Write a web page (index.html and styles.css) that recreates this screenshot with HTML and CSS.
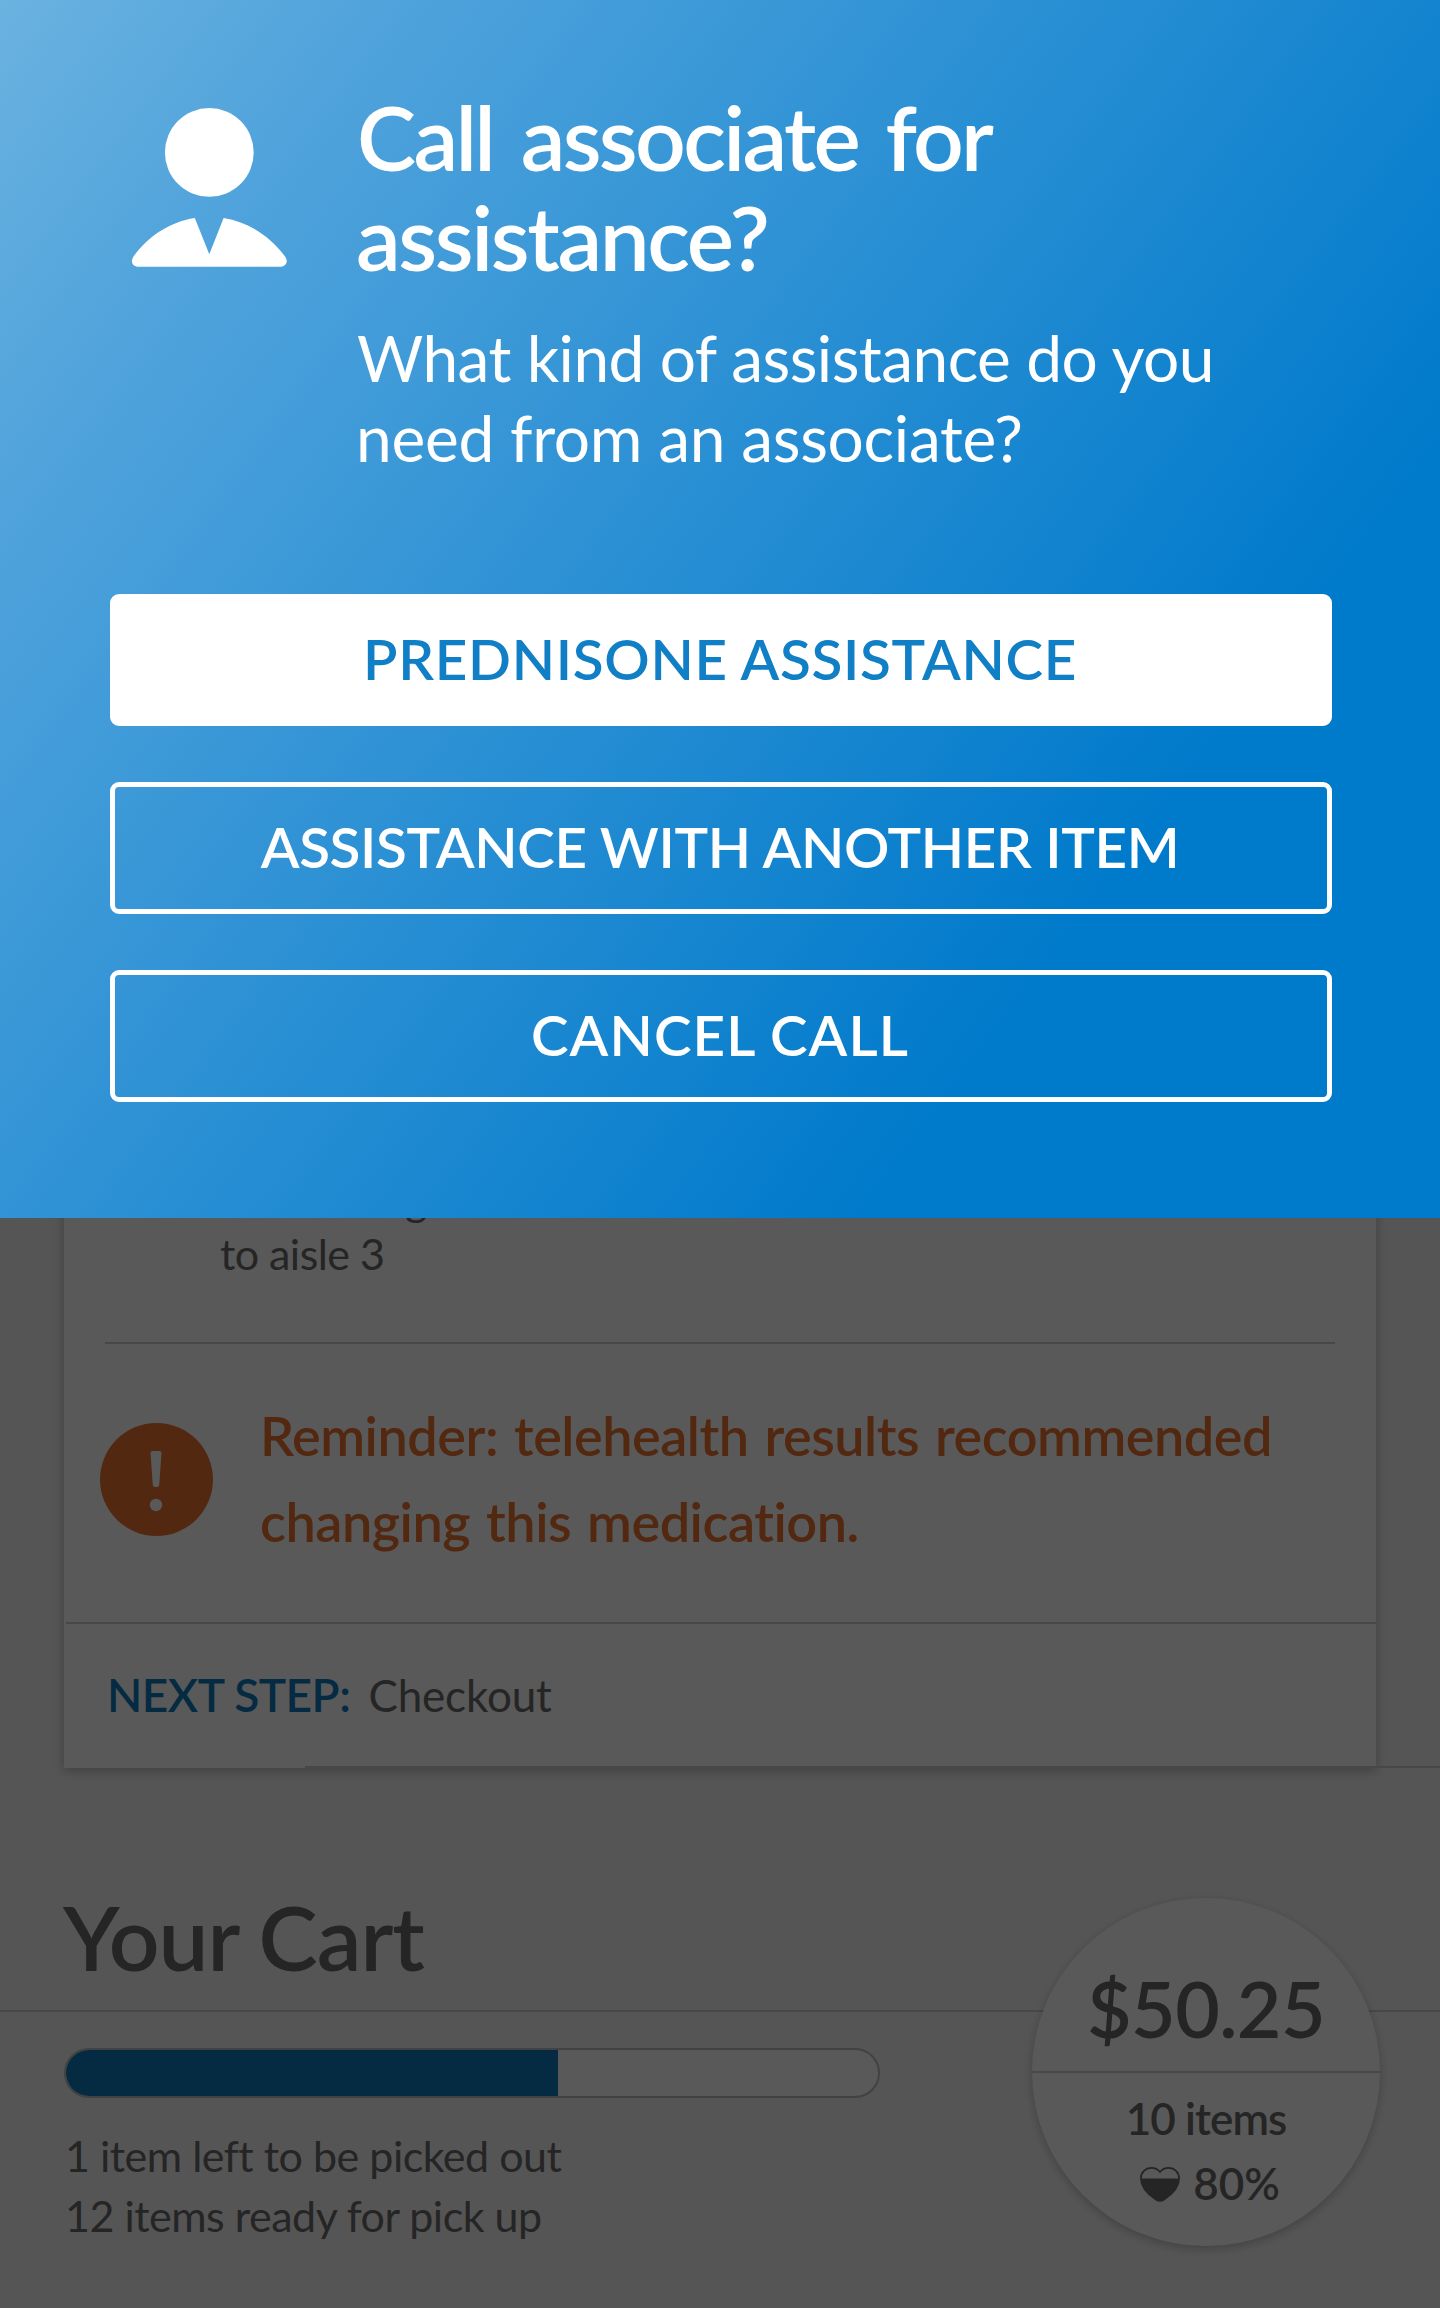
FILE: index.html
```html
<!DOCTYPE html>
<html lang="en">
<head>
<meta charset="utf-8">
<title>Call associate</title>
<link rel="stylesheet" href="styles.css">
</head>
<body>
<div class="screen">
  <main class="page">
    <section class="card">
      <p class="direction"><span class="direction-end">g</span><span>to aisle 3</span></p>
      <div class="divider"></div>
      <div class="reminder">
        <svg class="alert-icon" viewBox="0 0 113 113" aria-hidden="true">
          <circle class="alert-disc" cx="56.5" cy="56.5" r="56.5"/>
          <path class="alert-mark" d="M52.500 28h7a2 2 0 0 1 2 2l-2.300 32a2 2 0 0 1-2 2h-2.400a2 2 0 0 1-2-2l-2.300-32a2 2 0 0 1 2-2z"/>
          <circle class="alert-mark" cx="56" cy="82" r="6.200"/>
        </svg>
        <p class="reminder-text"><span>Reminder: telehealth results recommended</span><span>changing this medication.</span></p>
      </div>
      <div class="next">
        <span class="next-label">NEXT STEP:</span>
        <span class="next-value">Checkout</span>
      </div>
    </section>

    <section class="cart">
      <h2 class="cart-title">Your Cart</h2>
      <div class="cart-detail">
        <div class="progress"><div class="progress-fill" style="width: 492px"></div></div>
        <p class="cart-status"><span>1 item left to be picked out</span><span class="ready">12 items ready for pick up</span></p>
      </div>
      <div class="total">
        <div class="price">$50.25</div>
        <div class="total-info">
          <div class="count">10 items</div>
          <div class="health">
            <svg class="heart" viewBox="0 0 40 35" aria-hidden="true">
              <path class="heart-line" d="M20 5C17.500 2 14.500 .9 11.500 .9C5.500 .9 .9 5.600 .9 11.500C.9 20 8.500 27.500 15.500 32.300C18.500 34.500 21.500 34.500 24.500 32.300C31.500 27.500 39.100 20 39.100 11.500C39.100 5.600 34.500 .9 28.500 .9C25.500 .9 22.500 2 20 5z"/>
              <path class="heart-fill" d="M.9 11.500H39.100C39.100 20 31.500 27.500 24.500 32.300C21.500 34.500 18.500 34.500 15.500 32.300C8.500 27.500 .9 20 .9 11.500z"/>
            </svg>
            <span>80%</span>
          </div>
        </div>
      </div>
    </section>
  </main>

  <div class="scrim"></div>

  <section class="modal">
    <header class="modal-head">
      <svg class="person" viewBox="0 0 155 159" aria-hidden="true">
        <circle cx="77.300" cy="44.400" r="44.400"/>
        <path d="M62.800 110L77.300 146.200L91.600 110C117 114 139 129 153 148.500C157.500 155 152.500 158.800 148 158.800H7C2 158.800 -2.500 155 1.500 148.500C15.500 129 37 114 62.800 110z"/>
      </svg>
      <div class="modal-copy">
        <h1 class="modal-title"><span class="title-a">Call associate for</span><span class="title-b">assistance?</span></h1>
        <p class="modal-text"><span class="text-a">What kind of assistance do you</span><span class="text-b">need from an associate?</span></p>
      </div>
    </header>
    <div class="actions">
      <button class="btn btn-primary">PREDNISONE ASSISTANCE</button>
      <button class="btn btn-other">ASSISTANCE WITH ANOTHER ITEM</button>
      <button class="btn btn-cancel">CANCEL CALL</button>
    </div>
  </section>
</div>
</body>
</html>
```
FILE: styles.css
```css
* { box-sizing: border-box; margin: 0; padding: 0; }

body { font-family: Lato, "Open Sans", sans-serif; color: #6b6b6b; }
p span, h1 span { display: block; white-space: nowrap; }
svg { display: block; flex: none; }

.screen { position: relative; width: 1440px; height: 2308px; overflow: hidden; background: #f3f3f3; }

/* Page beneath the modal */
.card {
  width: 1312px; height: 1768px; margin-left: 64px; padding-top: 1164px;
  background: #fff; box-shadow: 0 3px 10px rgba(0, 0, 0, .26);
}
.direction { padding-left: 156px; font-size: 43px; line-height: 60px; letter-spacing: -.55px; }
.direction .direction-end { height: 60px; padding: 6px 0 0 185px; }
.divider { height: 2px; margin: 58px 41px 0 41px; background: #cecece; }
.reminder { display: flex; gap: 47px; height: 278px; padding: 49px 0 0 36px; color: #ea7231; }
.alert-icon { width: 113px; height: 113px; margin-top: 30px; }
.alert-disc { fill: #ea7231; }
.alert-mark { fill: #fff; }
.reminder-text { font-size: 54px; font-weight: 600; line-height: 86px; letter-spacing: -.48px; word-spacing: 3px; }
.next {
  display: flex; align-items: baseline; gap: 18px; margin-left: 2px; padding: 43px 0 0 41px;
  border-top: 2px solid #cecece; line-height: 56px;
}
.next-label { font-size: 46px; font-weight: 600; letter-spacing: -.5px; color: #117bbd; }
.next-value { font-size: 44px; letter-spacing: -.15px; }

.cart { position: relative; padding-top: 119px; }
.cart::before { content: ""; position: absolute; top: -2px; left: 305px; right: 0; height: 2px; background: #cecece; }
.cart-title {
  height: 125px; padding-left: 63px; border-bottom: 2px solid #cecece;
  font-size: 89px; font-weight: 600; line-height: 100px; letter-spacing: -1px;
}
.cart-detail { padding: 36px 0 0 64px; }
.progress { width: 816px; height: 50px; overflow: hidden; border: 2px solid #bcbcbc; border-radius: 25px; background: #fff; }
.progress-fill { height: 100%; background: #117bbd; }
.cart-status { margin-top: 28px; padding-left: 1px; font-size: 43px; line-height: 60px; letter-spacing: -.5px; }

.total {
  position: absolute; top: 130px; left: 1032px; width: 348px; height: 348px; overflow: visible;
  border-radius: 50%; background: #fff; box-shadow: 0 3px 10px rgba(0, 0, 0, .22);
  font-weight: 600; text-align: center;
}
.price { height: 175px; padding-top: 70px; border-bottom: 2px solid #cecece; font-size: 77px; line-height: 80px; letter-spacing: -.6px; }
.total-info { padding-top: 13px; font-size: 44px; line-height: 65px; }
.count { letter-spacing: -.9px; }
.health { display: flex; justify-content: center; gap: 13px; padding-left: 8px; }
.heart { width: 40px; height: 35px; margin-top: 16px; }
.heart-line { fill: none; stroke: #6b6b6b; stroke-width: 1.8; }
.heart-fill { fill: #6b6b6b; }

.scrim { position: absolute; inset: 0; background: rgba(0, 0, 0, .65); }

/* Call associate sheet */
.modal {
  position: absolute; top: 0; left: 0; width: 1440px; height: 1218px; padding: 87px 108px 0 110px;
  background: linear-gradient(126.9deg, #6ab2e0 0%, #52a4dc 15%, #007acb 75.5%); color: #fff;
}
.modal-head { display: flex; gap: 69px; padding-left: 22px; }
.person { width: 155px; height: 159px; margin-top: 20.5px; fill: #fff; overflow: visible; }
.modal-title { font-size: 89px; font-weight: 600; line-height: 100px; }
.title-a { padding-left: 1px; letter-spacing: -2.700px; word-spacing: 8px; }
.title-b { letter-spacing: -2.400px; }
.modal-text { margin-top: 31px; font-size: 64px; line-height: 80px; }
.text-a { padding-left: 1px; letter-spacing: -.55px; }
.text-b { letter-spacing: -.3px; }
.actions { display: flex; flex-direction: column; gap: 56px; margin-top: 116px; }
.btn {
  height: 132px; padding: 0 2px 4px 0; border: 5px solid #fff; border-radius: 9px; background: none; color: #fff;
  font-family: inherit; font-size: 56.500px; font-weight: 600; white-space: nowrap;
}
.btn-primary { background: #fff; color: #117fc5; letter-spacing: .7px; }
.btn-other { letter-spacing: -.35px; }
.btn-cancel { letter-spacing: 1.1px; }
```
